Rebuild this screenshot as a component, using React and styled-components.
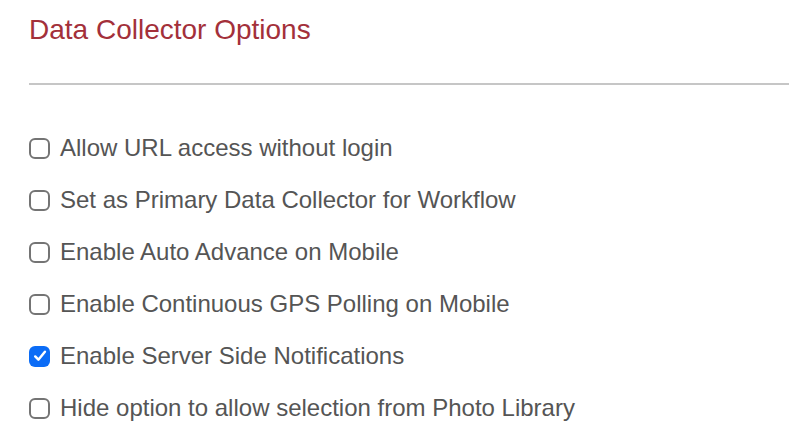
import React from "react";
import styled, { createGlobalStyle } from "styled-components";

const Global = createGlobalStyle`
  html, body { margin: 0; padding: 0; background: #fff; }
  body { font-family: "Liberation Sans", Arial, sans-serif; }
`;

const Page = styled.div`
  padding: 13px 9px 0 29px;
  width: 798px;
  height: 426px;
  box-sizing: border-box;
  overflow: hidden;
`;

const Title = styled.h2`
  margin: 0;
  font-weight: 400;
  font-size: 28px;
  line-height: 34px;
  color: #a3303a;
`;

const Rule = styled.hr`
  margin: 36px 0 0 0;
  border: 0;
  height: 2px;
  background: #c6c6c6;
`;

const List = styled.div`
  display: flex;
  flex-direction: column;
  gap: 20px;
  margin-top: 47px;
`;

const Row = styled.label`
  display: flex;
  align-items: center;
  gap: 10px;
  height: 32px;
  font-size: 24px;
  color: #555;
`;

const Box = styled.span`
  width: 21px;
  height: 21px;
  box-sizing: border-box;
  border-radius: 6px;
  border: ${(p) => (p.$checked ? "none" : "2px solid #747474")};
  background: ${(p) => (p.$checked ? "#0b6cf6" : "#fff")};
  display: flex;
  align-items: center;
  justify-content: center;
  flex: none;
`;

const options = [
  ["Allow URL access without login", false],
  ["Set as Primary Data Collector for Workflow", false],
  ["Enable Auto Advance on Mobile", false],
  ["Enable Continuous GPS Polling on Mobile", false],
  ["Enable Server Side Notifications", true],
  ["Hide option to allow selection from Photo Library", false],
];

export default function App() {
  return (
    <Page>
      <Global />
      <Title>Data Collector Options</Title>
      <Rule />
      <List>
        {options.map(([t, c]) => (
          <Row key={t}>
            <Box $checked={c}>
              {c && (
                <svg width="16" height="16" viewBox="0 0 13 13">
                  <path d="M2.6 6.9 L5.2 9.5 L10.5 3.1" fill="none" stroke="#fff" strokeWidth="2" strokeLinecap="round" strokeLinejoin="round" />
                </svg>
              )}
            </Box>
            {t}
          </Row>
        ))}
      </List>
    </Page>
  );
}
